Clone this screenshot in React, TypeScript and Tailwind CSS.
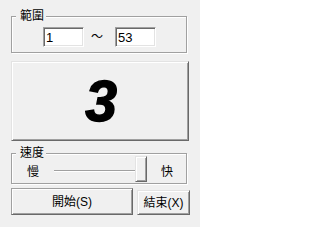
import type { ReactNode } from "react";

const raised =
  "border border-t-[#e3e3e3] border-l-[#e3e3e3] border-b-[#696969] border-r-[#696969] shadow-[inset_1px_1px_0_#fff,inset_-1px_-1px_0_#a0a0a0]";

const GroupBox = ({ title, children, className = "" }: { title: string; children: ReactNode; className?: string }) => (
  <fieldset
    className={`ml-[11px] w-[176px] border border-[#a0a0a0] shadow-[inset_1px_1px_0_#fff,1px_1px_0_#fff] ${className}`}
  >
    <legend className="ml-[4px] pl-[4px] pr-[2px] bg-[#f0f0f0] text-[12px] leading-[13px]">{title}</legend>
    {children}
  </fieldset>
);

const NumberBox = ({ value }: { value: string }) => (
  <input
    readOnly
    defaultValue={value}
    className="w-[41px] h-[20px] bg-white pl-[2px] text-[13px] text-black outline-none border border-t-[#a0a0a0] border-l-[#a0a0a0] border-b-white border-r-white shadow-[inset_1px_1px_0_#696969,inset_-1px_-1px_0_#e3e3e3]"
  />
);

export default function App() {
  return (
    <div className="w-[200px] h-[227px] bg-[#f0f0f0] text-black font-['Liberation_Sans','Noto_Sans_CJK_TC',sans-serif] flex flex-col pt-[10px] select-none">
      {/* 範圍 */}
      <GroupBox title="範圍">
        <div className="flex items-center mt-[4px] pb-[5px] pl-[31px]">
          <NumberBox value="1" />
          <span className="w-[31px] pl-[7px] text-[12px] leading-none">～</span>
          <NumberBox value="53" />
        </div>
      </GroupBox>

      {/* 數字面板 */}
      <div className={`mt-[8px] ml-[11px] w-[178px] h-[80px] flex items-center justify-center ${raised}`}>
        <span className="pl-[2px] text-[57px] leading-none font-bold italic font-['Liberation_Sans',sans-serif] [-webkit-text-stroke:1.5px_black]">
          3
        </span>
      </div>

      {/* 速度 */}
      <GroupBox title="速度" className="mt-[6px]">
        <div className="flex items-center h-[23px] pl-[15px] text-[12px]">
          <span className="leading-none">慢</span>
          <div className="relative ml-[15px] w-[93px] h-full">
            <div className="absolute left-0 top-[10px] w-[81px] h-[2px] border-t border-[#a0a0a0] border-b border-b-white" />
            <div className={`absolute left-[81px] -top-[4px] w-[12px] h-[26px] bg-[#f0f0f0] ${raised}`} />
          </div>
          <span className="ml-[14px] leading-none">快</span>
        </div>
      </GroupBox>

      {/* 按鈕 */}
      <div className="flex items-end mt-[4px] ml-[11px] text-[12px]">
        <button className="w-[122px] h-[27px] bg-[#f0f0f0] border border-t-[#a0a0a0] border-l-[#a0a0a0] border-b-[#696969] border-r-[#696969] shadow-[inset_1px_1px_0_#fff,inset_-1px_-1px_0_#a0a0a0] pt-[1px]">
          開始(S)
        </button>
        <button className={`ml-[4px] w-[53px] h-[25px] bg-[#f0f0f0] pt-[1px] ${raised}`}>結束(X)</button>
      </div>
    </div>
  );
}
